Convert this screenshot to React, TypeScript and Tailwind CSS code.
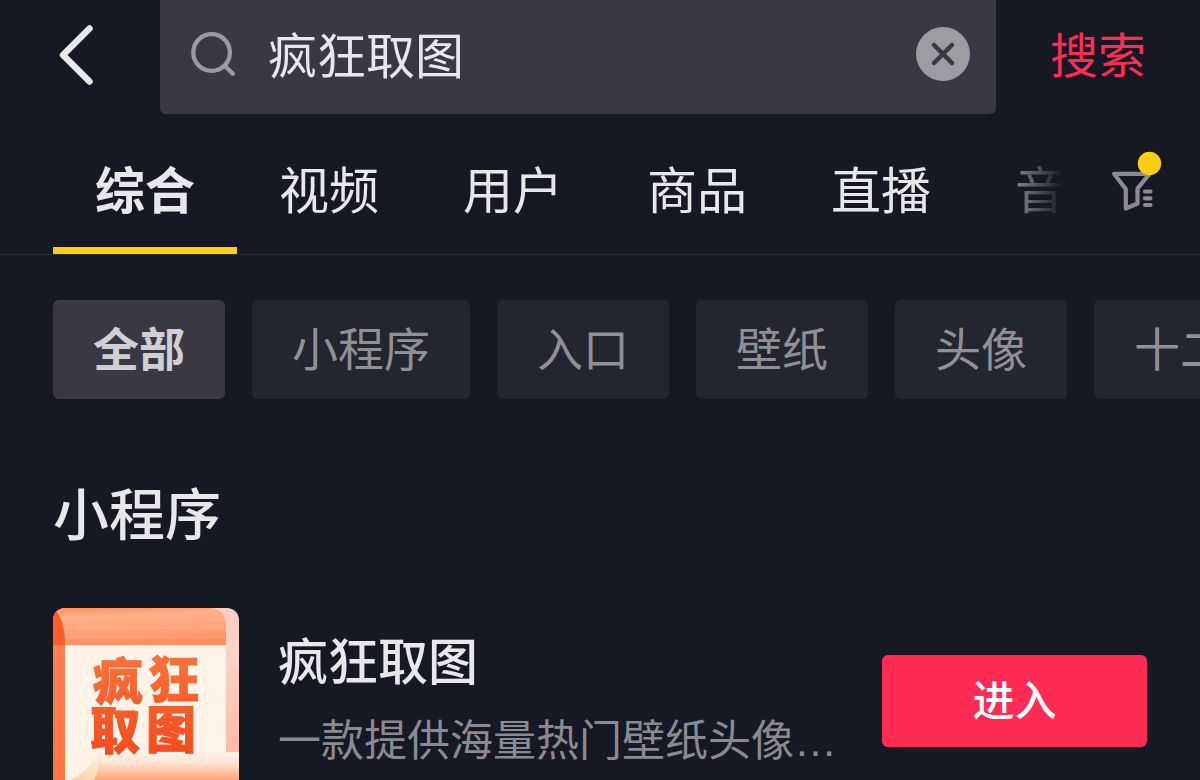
import { useState } from "react";

const tabs = ["综合", "视频", "用户", "商品", "直播", "音乐"];
const filters = ["全部", "小程序", "入口", "壁纸", "头像", "十二生肖"];

function BackIcon() {
  return (
    <svg width="36" height="62" viewBox="0 0 36 62" fill="none" aria-hidden="true">
      <path d="M31.500 4.500 5 31 31.500 57.500" stroke="#e8e8ea" strokeWidth="6.500" strokeLinecap="round" strokeLinejoin="round" />
    </svg>
  );
}

function SearchIcon() {
  return (
    <svg className="shrink-0" width="46" height="46" viewBox="0 0 46 46" fill="none" stroke="#9b9ba0" strokeWidth="4.300" strokeLinecap="round" aria-hidden="true">
      <circle cx="20.600" cy="21.500" r="18.300" />
      <path d="M34.500 35.500 41.800 42.800" />
    </svg>
  );
}

function ClearIcon() {
  return (
    <svg width="54" height="54" viewBox="0 0 54 54" aria-hidden="true">
      <circle cx="27" cy="27" r="27" fill="#9d9ca1" />
      <path d="M18 18 36 36M36 18 18 36" stroke="#3a3943" strokeWidth="4.500" strokeLinecap="round" />
    </svg>
  );
}

function FilterIcon() {
  return (
    <svg width="60" height="70" viewBox="0 0 60 70" fill="none" aria-hidden="true">
      <path d="M9 28.800H44.500L32.500 43.500V58.500L20.800 63.500V44Z" stroke="#8b8b91" strokeWidth="4.200" strokeLinejoin="round" />
      <path d="M40 46.500H45.500M40 53.300H45.500M40 60H45.500" stroke="#8b8b91" strokeWidth="4.200" strokeLinecap="round" />
      <circle cx="44.500" cy="18.500" r="11.700" fill="#face15" />
    </svg>
  );
}

function AppLogo() {
  return (
    <svg className="shrink-0 rounded-xl" width="186" height="186" viewBox="0 0 186 186" role="img" aria-label="疯狂取图">
      <defs>
        <linearGradient id="band" x1="0" y1="0" x2="0.2" y2="1">
          <stop offset="0" stopColor="#ff8c5c" />
          <stop offset="0.25" stopColor="#ffaf88" />
          <stop offset="0.65" stopColor="#ffa57c" />
          <stop offset="1" stopColor="#ff8e62" />
        </linearGradient>
        <linearGradient id="spine" x1="0" y1="0" x2="0" y2="1">
          <stop offset="0" stopColor="#ff7f4f" />
          <stop offset="1" stopColor="#fa7542" />
        </linearGradient>
        <linearGradient id="side" x1="0" y1="0" x2="0" y2="1">
          <stop offset="0" stopColor="#fdcfc3" />
          <stop offset="0.4" stopColor="#fdcbbf" />
          <stop offset="1" stopColor="#feae98" />
        </linearGradient>
        <linearGradient id="roll" x1="0" y1="0" x2="0" y2="1">
          <stop offset="0" stopColor="#fff2e8" />
          <stop offset="0.25" stopColor="#ffe6d6" />
          <stop offset="0.65" stopColor="#ffa678" />
          <stop offset="1" stopColor="#ff8d58" />
        </linearGradient>
        <linearGradient id="curl" x1="1" y1="0" x2="0.4" y2="1">
          <stop offset="0" stopColor="#fff0df" />
          <stop offset="1" stopColor="#fcc698" />
        </linearGradient>
        <linearGradient id="ink" gradientUnits="userSpaceOnUse" x1="0" y1="45" x2="0" y2="148">
          <stop offset="0" stopColor="#f5743c" />
          <stop offset="1" stopColor="#f54a1c" />
        </linearGradient>
      </defs>
      <rect width="186" height="186" fill="url(#side)" />
      <path d="M173 34 186 31V58L173 64Z" fill="#fff" opacity="0.12" />
      <path d="M0 0H157Q173 1 173 18V37H0Z" fill="url(#band)" />
      <path d="M8 11H171M10 20H173M11 29H173" stroke="#ffc09d" strokeWidth="3" opacity="0.2" />
      <rect y="37" width="12" height="149" fill="url(#spine)" />
      <path d="M0 0Q12 10 12 37H0Z" fill="#ff5d27" />
      <rect x="12" y="37" width="161" height="149" fill="#fff2e7" />
      <path d="M44 144H186V186H30Q47 165 44 144Z" fill="url(#roll)" />
      <path d="M12 174Q35 166 44 146Q48 168 32 186H12Z" fill="url(#curl)" />
      <g
        fill="url(#ink)"
        stroke="url(#ink)"
        strokeWidth="1"
        className="font-['Noto_Sans_CJK_SC',sans-serif] text-[50px] font-black"
      >
        <text x="40 96" y="92 90">疯狂</text>
        <text x="37 93" y="141 140">取图</text>
      </g>
    </svg>
  );
}

export default function App() {
  const [query, setQuery] = useState("疯狂取图");
  const [tab, setTab] = useState("综合");
  const [filter, setFilter] = useState("全部");

  return (
    <main className="h-screen overflow-hidden bg-[#161823] font-['Noto_Sans_CJK_SC',sans-serif] text-[#e8e8ea]">
      <header className="flex h-[114px]">
        <button type="button" aria-label="返回" className="flex w-40 shrink-0 items-center pb-1 pl-[58px]">
          <BackIcon />
        </button>
        <div className="flex min-w-0 flex-1 items-center rounded-b-md bg-[#3a3943] pr-[26px] pb-1.5 pl-[31px]">
          <SearchIcon />
          <input
            type="text"
            aria-label="搜索内容"
            value={query}
            onChange={(e) => setQuery(e.target.value)}
            className="ml-[31px] h-[60px] min-w-0 flex-1 bg-transparent pb-1 text-[49px] leading-[56px] outline-none"
          />
          <button type="button" aria-label="清除" onClick={() => setQuery("")} className="shrink-0">
            <ClearIcon />
          </button>
        </div>
        <button type="button" className="shrink-0 px-[54px] pb-2.5 text-5xl text-[#fe2c55]">
          搜索
        </button>
      </header>

      <div className="flex border-b border-[#292a34]">
        <nav className="flex min-w-0 flex-1 overflow-hidden pl-[53px] [mask-image:linear-gradient(to_right,black_calc(100%-90px),transparent)]">
          {tabs.map((name) => (
            <button
              key={name}
              type="button"
              onClick={() => setTab(name)}
              className={`shrink-0 border-b-[7px] px-[42px] pt-[43px] pb-[30px] text-[50px] leading-[60px] ${
                name === tab ? "border-[#face15] font-bold" : "border-transparent"
              }`}
            >
              {name}
            </button>
          ))}
        </nav>
        <button type="button" aria-label="筛选" className="flex w-[137px] shrink-0 items-start pt-[31px] pl-[42px]">
          <FilterIcon />
        </button>
      </div>

      <div className="mt-[45px] flex gap-[27px] overflow-hidden pl-[53px]">
        {filters.map((name) => (
          <button
            key={name}
            type="button"
            onClick={() => setFilter(name)}
            className={`shrink-0 rounded-md px-10 pt-4 pb-[23px] text-[46px] leading-[60px] ${
              name === filter ? "bg-[#3a3943] font-bold text-[#d0d0d3]" : "bg-[#24262f] text-[#909096]"
            }`}
          >
            {name}
          </button>
        ))}
      </div>

      <section className="px-[53px]">
        <h2 className="mt-20 text-[56px] leading-[64px] font-medium">小程序</h2>
        <article className="mt-[65px] flex items-start">
          <AppLogo />
          <div className="ml-[39px] min-w-0 flex-1 pt-5 whitespace-nowrap">
            <h3 className="text-[50px] leading-[60px] font-medium">疯狂取图</h3>
            <p className="mt-[23px] text-[43px] leading-[52px] text-[#8a8b91]">
              一款提供海量热门壁纸头像<span className="font-['Liberation_Sans',sans-serif]">…</span>
            </p>
          </div>
          <button
            type="button"
            className="mt-[47px] h-[92px] w-[265px] shrink-0 rounded-md bg-[#fe2c55] pb-2 text-[42px] font-medium text-white"
          >
            进入
          </button>
        </article>
      </section>
    </main>
  );
}
